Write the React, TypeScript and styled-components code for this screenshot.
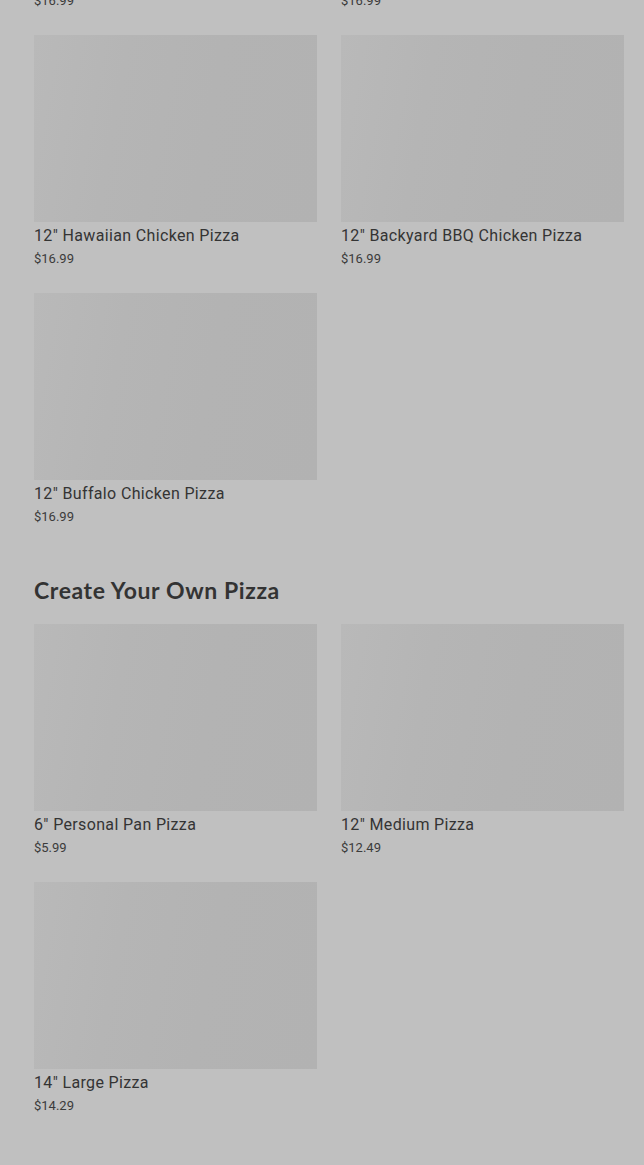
import styled, { createGlobalStyle } from 'styled-components';

const GlobalStyle = createGlobalStyle`
  html, body {
    margin: 0;
    padding: 0;
    background: #c0c0c0;
  }
  body {
    font-family: Roboto, "Noto Sans", "Liberation Sans", sans-serif;
    overflow: hidden;
  }
`;

const Page = styled.div`
  margin-top: -223px;
  padding: 0 20px 60px 34px;
  display: flex;
  flex-direction: column;
  gap: 50px;
`;

const Section = styled.section`
  display: flex;
  flex-direction: column;
`;

const SectionTitle = styled.h2`
  margin: 0 0 20px;
  font-family: Lato, "Noto Sans", sans-serif;
  font-weight: 700;
  font-size: 23px;
  line-height: 28px;
  color: #333333;
  letter-spacing: 0.6px;
`;

const Grid = styled.div`
  display: grid;
  grid-template-columns: 283px 283px;
  column-gap: 24px;
  row-gap: 25px;
`;

const Card = styled.div`
  display: flex;
  flex-direction: column;
`;

const Thumb = styled.div`
  height: 187px;
  background: linear-gradient(100deg, #b9b9b9 0%, #b5b5b5 30%, #b3b3b3 60%, #b2b2b2 100%);
`;

const Name = styled.p`
  margin: 4px 0 0;
  font-size: 16px;
  line-height: 20px;
  font-weight: 400;
  letter-spacing: 0.35px;
  color: #343434;
`;

const Price = styled.p`
  margin: 4px 0 0;
  font-size: 13px;
  line-height: 18px;
  color: #3b3b3b;
`;

type Item = { name: string; price: number };

const specialty: Item[] = [
  { name: '12" Chicken Bacon Ranch Pizza', price: 16.99 },
  { name: '12" Spicy Chicken Pizza', price: 16.99 },
  { name: '12" Hawaiian Chicken Pizza', price: 16.99 },
  { name: '12" Backyard BBQ Chicken Pizza', price: 16.99 },
  { name: '12" Buffalo Chicken Pizza', price: 16.99 },
];

const custom: Item[] = [
  { name: '6" Personal Pan Pizza', price: 5.99 },
  { name: '12" Medium Pizza', price: 12.49 },
  { name: '14" Large Pizza', price: 14.29 },
];

function ProductCard({ name, price }: Item) {
  return (
    <Card>
      <Thumb />
      <Name>{name}</Name>
      <Price>{`$${price.toFixed(2)}`}</Price>
    </Card>
  );
}

export default function App() {
  return (
    <>
      <GlobalStyle />
      <Page>
        <Section>
          <Grid>
            {specialty.map((item) => (
              <ProductCard key={item.name} {...item} />
            ))}
          </Grid>
        </Section>
        <Section>
          <SectionTitle>Create Your Own Pizza</SectionTitle>
          <Grid>
            {custom.map((item) => (
              <ProductCard key={item.name} {...item} />
            ))}
          </Grid>
        </Section>
      </Page>
    </>
  );
}
